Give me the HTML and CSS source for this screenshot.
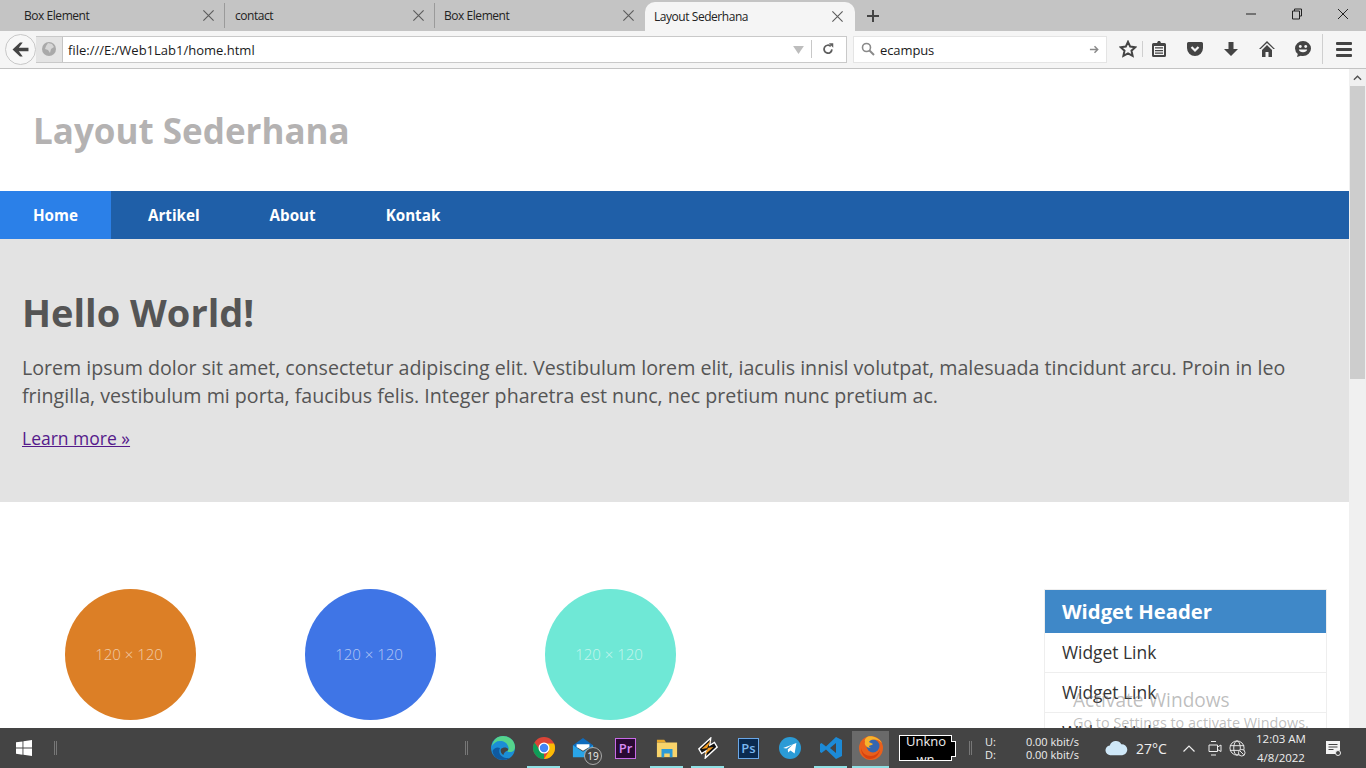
FILE: index.html
```html
<!DOCTYPE html>
<html lang="id">
<head>
<meta charset="utf-8">
<title>Layout Sederhana</title>
<link rel="stylesheet" href="styles.css">
</head>
<body>
<div class="window">
  <div class="tabbar">
    <div class="tab"><span class="tab-title">Box Element</span><svg class="x" viewBox="0 0 14 14"><path d="M1.500 1.500l11 11M12.500 1.500l-11 11"/></svg></div>
    <div class="tab"><span class="tab-title">contact</span><svg class="x" viewBox="0 0 14 14"><path d="M1.500 1.500l11 11M12.500 1.500l-11 11"/></svg></div>
    <div class="tab tab-last"><span class="tab-title">Box Element</span><svg class="x" viewBox="0 0 14 14"><path d="M1.500 1.500l11 11M12.500 1.500l-11 11"/></svg></div>
    <div class="tab tab-active"><span class="tab-title">Layout Sederhana</span><svg class="x" viewBox="0 0 14 14"><path d="M1.500 1.500l11 11M12.500 1.500l-11 11"/></svg></div>
    <svg class="newtab" viewBox="0 0 12 12"><path d="M6 0v12M0 6h12"/></svg>
    <div class="winctl">
      <svg class="winbtn" viewBox="0 0 12 12"><path d="M1 6h10"/></svg>
      <svg class="winbtn" viewBox="0 0 12 12"><path d="M3.500 3V1h7v7H8.500M1.500 3h7v8h-7z"/></svg>
      <svg class="winbtn" viewBox="0 0 12 12"><path d="M1 1l10 10M11 1L1 11"/></svg>
    </div>
  </div>
  <div class="toolbar">
    <div class="back"><svg viewBox="0 0 16 16" width="17" height="17"><path class="ink" d="M0.500 8L7.500 1.500h2.600L6.400 6.300H15.500v3.400H6.400l3.700 4.800H7.500z"/></svg></div>
    <div class="urlbar">
      <div class="identity"><svg viewBox="0 0 16 16" width="16" height="16"><circle cx="8" cy="8" r="7" fill="#a9a9a9"/><path d="M7 2l4 1 2 3-3 2-1 4-2-3-3-1 1-3z" fill="#d6d6d6"/></svg></div>
      <span class="url">file:///E:/Web1Lab1/home.html</span>
      <svg class="drop" viewBox="0 0 12 10"><path d="M0 1h12L6 10z"/></svg>
      <span class="urlsep"></span>
      <svg class="reload" viewBox="0 0 16 16"><path d="M12.500 8.500a4.500 4.500 0 1 1-1.400-3.600" fill="none" stroke="#5e5e5e" stroke-width="2"/><path d="M9 1.500h5v5z" fill="#5e5e5e"/></svg>
    </div>
    <div class="searchbar">
      <svg class="lens" viewBox="0 0 14 14"><circle cx="5.500" cy="5.500" r="4" fill="none" stroke="#8a8a8a" stroke-width="1.600"/><path d="M8.500 8.500l4.500 4.500" stroke="#8a8a8a" stroke-width="2"/></svg>
      <span class="query">ecampus</span>
      <svg class="go" viewBox="0 0 12 12"><path d="M1 6h8M6 2.500L9.500 6 6 9.500" fill="none" stroke="#8a8a8a" stroke-width="1.600"/></svg>
    </div>
    <div class="tools">
      <svg class="tool t-star" viewBox="0 0 18 18"><path d="M9 1.800l2.200 4.800 5.200.6-3.900 3.500 1.100 5.200L9 13.300l-4.600 2.600 1.100-5.200-3.900-3.500 5.200-.6z" fill="none" stroke="#444" stroke-width="2"/></svg>
      <span class="toolsep"></span>
      <svg class="tool t-list" viewBox="0 0 18 18"><path class="ink" fill-rule="evenodd" d="M2 4.500A1.500 1.500 0 0 1 3.500 3H7l1-2h2l1 2h3.500A1.500 1.500 0 0 1 16 4.500V15.500A1.500 1.500 0 0 1 14.500 17h-11A1.500 1.500 0 0 1 2 15.500zM4 6v9h10V6z"/><path class="ink" d="M5 7.300h8v1.300H5zM5 9.900h8v1.300H5zM5 12.500h8v1.300H5z"/></svg>
      <svg class="tool t-pocket" viewBox="0 0 18 18"><path class="ink" d="M2.500 2h13A1.500 1.500 0 0 1 17 3.500V8a8 8 0 0 1-16 0V3.500A1.500 1.500 0 0 1 2.500 2z"/><path d="M5.500 7L9 10.500 12.500 7" fill="none" stroke="#f5f5f5" stroke-width="2.200"/></svg>
      <svg class="tool t-down" viewBox="0 0 18 18"><path class="ink" d="M6.500 2h5v7h4.500L9 16 2 9h4.500z"/></svg>
      <svg class="tool t-home" viewBox="0 0 18 18"><path class="ink" d="M9 1l8 8h-1.700L9 3 2.700 9H1zM9 5l5 5v7h-3.500v-5h-3v5H4v-7z"/></svg>
      <svg class="tool t-smile" viewBox="0 0 18 18"><path class="ink" d="M9 1a8 7.500 0 0 1 0 15c-.8 0-1.500-.1-2.200-.3L3 17l.8-3A7.500 7.500 0 0 1 1 8.500 8 7.500 0 0 1 9 1z"/><circle cx="6.300" cy="6.500" r="1.400" fill="#f5f5f5"/><circle cx="11.700" cy="6.500" r="1.400" fill="#f5f5f5"/><path d="M4.800 9.500h8.400a4.300 3.500 0 0 1-8.400 0z" fill="#f5f5f5"/></svg>
      <span class="toolsep toolsep-menu"></span>
      <div class="burger"><span></span><span></span><span></span></div>
    </div>
  </div>
  <div class="viewport">
    <div class="page">
      <header class="site-header"><div class="site-title">Layout Sederhana</div></header>
      <nav class="site-nav">
        <a class="nav-item nav-current">Home</a>
        <a class="nav-item">Artikel</a>
        <a class="nav-item">About</a>
        <a class="nav-item">Kontak</a>
      </nav>
      <section class="hero">
        <h1>Hello World!</h1>
        <p>Lorem ipsum dolor sit amet, consectetur adipiscing elit. Vestibulum lorem elit, iaculis innisl volutpat, malesuada tincidunt arcu. Proin in leo fringilla, vestibulum mi porta, faucibus felis. Integer pharetra est nunc, nec pretium nunc pretium ac.</p>
        <a class="more">Learn more »</a>
      </section>
      <section class="content">
        <div class="circles">
          <div class="circle c-orange">120 × 120</div>
          <div class="circle c-blue">120 × 120</div>
          <div class="circle c-teal">120 × 120</div>
        </div>
        <aside class="widget">
          <div class="widget-head">Widget Header</div>
          <div class="widget-link">Widget Link</div>
          <div class="widget-link">Widget Link</div>
          <div class="widget-link">Widget Link</div>
        </aside>
      </section>
    </div>
    <div class="scrollbar">
      <svg class="sb-up" viewBox="0 0 10 6"><path d="M1 5l4-4 4 4" fill="none" stroke="#505050" stroke-width="1.500"/></svg>
      <div class="sb-thumb"></div>
    </div>
    <div class="activate">
      <div class="activate-big">Activate Windows</div>
      <div class="activate-small">Go to Settings to activate Windows.</div>
    </div>
  </div>
  <div class="taskbar">
    <svg class="start" viewBox="0 0 16 16"><path fill="#fff" d="M0 2.300l6.500-.9v6.200H0zM7.400 1.300L16 0v7.600H7.400zM0 8.500h6.500v6.200L0 13.800zM7.400 8.500H16V16l-8.600-1.200z"/></svg>
    <span class="grip grip-a"></span>
    <span class="grip grip-b"></span>
    <div class="apps">
      <div class="app"><svg class="i24" viewBox="0 0 24 24"><circle cx="12" cy="12" r="12" fill="#1b8ed6"/><path fill="#55d48c" d="M12 0c7 0 12 5 12 11 0 3-2 5-5 5-1 0-2 0-3-1 2-1 2-3 1-5-1-3-4-5-8-5S3 7 1 10C2 4 6 0 12 0z"/><path fill="#0f5aa0" d="M9 12c-2 4 0 9 6 10 2 .3 3 0 4-.5C17 23 15 24 12 24 6 24 2 20 1.500 15 3 12 6 10.500 9 12z"/><path fill="#444" d="M10 13c2-2 6-2 7 0 .5 1-.5 2-1.500 2-1.500 1-3 2-3 4-2-1-3.500-4-2.500-6z"/></svg></div>
      <div class="app app-run"><svg class="i22" viewBox="0 0 24 24"><circle cx="12" cy="12" r="12" fill="#db4437"/><path fill="#0f9d58" d="M12 24A12 12 0 0 1 1.600 6L8 15l4 3z"/><path fill="#fbbc05" d="M24 12a12 12 0 0 1-12 12l5-8-1-9h7a12 12 0 0 1 1 5z"/><circle cx="12" cy="12" r="6" fill="#fff"/><circle cx="12" cy="12" r="4.600" fill="#4285f4"/></svg></div>
      <div class="app app-mail"><svg class="i22 mail-icon" viewBox="0 0 24 24"><path fill="#0f6cbd" d="M12 1l11 8v3H1V9z"/><path fill="#2aa5e8" d="M1 9l11 7 11-7v13H1z"/><path fill="#fff" d="M5 8h14v3l-7 4-7-4z"/></svg><span class="badge">19</span></div>
      <div class="app"><div class="adobe adobe-pr">Pr</div></div>
      <div class="app app-run"><svg class="i22" viewBox="0 0 24 24"><path fill="#e8a92b" d="M1 3h8l2 3H1z"/><path fill="#f8d36a" d="M1 6h22v16H1z"/><path fill="#2b9ad6" d="M6 13h12v9h-3v-4H9v4H6z"/></svg></div>
      <div class="app app-run"><svg class="i22" viewBox="0 0 24 24"><path fill="#111" stroke="#fff" stroke-width="1.500" d="M15 1L2 13l3 5 5-3-1 8 13-12-3-5-5 3 1-8z"/><path fill="#f29a1f" d="M15 4L5 13l7-1-4 8 10-9-7 1z"/></svg></div>
      <div class="app"><div class="adobe adobe-ps">Ps</div></div>
      <div class="app"><svg class="i22" viewBox="0 0 24 24"><circle cx="12" cy="12" r="12" fill="#2b9bd6"/><path fill="#fff" d="M4.500 12L19 6.500 17 18l-4.500-3.300L10 17l-.5-3.500 6-5.500-7.500 4.500z"/></svg></div>
      <div class="app app-run"><svg class="i24" viewBox="0 0 24 24"><path fill="#1c8ad6" d="M17 1l6 3v16l-6 3-10-9.500L2.500 17 1 16v-8l1.500-1L7 10.500zM17 7l-6 5 6 5z"/></svg></div>
      <div class="app app-active"><svg class="i24" viewBox="0 0 24 24"><circle cx="12" cy="12" r="12" fill="#e8601c"/><circle cx="14" cy="10" r="6.500" fill="#3566b0"/><path fill="#f7b42c" d="M9 .5C14-.5 20 2 23 7c-3-3-6-4-9-3.500-2 .3-3 1-4 2.500 1 1 3 1 4 2-1 1.500-3 1-4 2 0 1 1 1.500 2 1.500-3 1-5-1-6-3-.5-1 0-2 0-3C5 4 7 1.500 9 .5z"/><path fill="#d9420f" d="M2 12c1 5 5 8 10 8 4 0 8-3 9-7-.5 6-5 10-10 10-5 0-9-5-9-11z"/></svg></div>
    </div>
    <div class="monitor"><div class="batt"><div class="batt-text">Unkno wn</div></div></div>
    <span class="grip grip-c"></span>
    <div class="net">
      <div class="net-row"><span>U:</span><span>0.00 kbit/s</span></div>
      <div class="net-row"><span>D:</span><span>0.00 kbit/s</span></div>
    </div>
    <div class="tray">
      <svg class="cloud" viewBox="0 0 24 16"><path fill="#cfe8f8" d="M6 15.500a5 5 0 0 1-1-10A6.500 6.500 0 0 1 17 4a5.700 5.700 0 0 1 1 11.500z"/></svg>
      <span class="temp">27°C</span>
      <svg class="chev" viewBox="0 0 12 7"><path d="M.5 6.500L6 1l5.500 5.500" fill="none" stroke="#eee" stroke-width="1.200"/></svg>
      <svg class="cam" viewBox="0 0 14 18"><path d="M1 6h8.500v6.500H1zM9.500 8l3.500-2v6.500l-3.500-2M3 2.500h5M3 16h5" fill="none" stroke="#eee"/></svg>
      <svg class="globe" viewBox="0 0 18 18"><circle cx="8.500" cy="8.500" r="7.500" fill="none" stroke="#eee"/><ellipse cx="8.500" cy="8.500" rx="3.500" ry="7.500" fill="none" stroke="#eee"/><path d="M1 6h15M1 11h15" stroke="#eee"/><circle cx="13.500" cy="13.500" r="3.500" fill="#444" stroke="#eee"/><path d="M11.500 11.500l4 4" stroke="#eee"/></svg>
      <div class="clock"><div>12:03 AM</div><div>4/8/2022</div></div>
      <svg class="notif" viewBox="0 0 16 16"><path fill="#f4f4f4" d="M1 1h14v9l-3 4H1z"/><path d="M3.500 4.500h9M3.500 7h9M3.500 9.500h5" stroke="#444"/><circle cx="13" cy="13" r="2.500" fill="#444" stroke="#eee"/></svg>
    </div>
  </div>
</div>
</body>
</html>
```
FILE: styles.css
```css
* { box-sizing: border-box; }
html, body { margin: 0; padding: 0; height: 100%; overflow: hidden; }
body { font-family: "Open Sans", sans-serif; }
.window { width: 1366px; height: 768px; display: flex; flex-direction: column; overflow: hidden; }
.ink { fill: #444; }

.tabbar { height: 31px; flex: none; background: #c4c4c4; display: flex; align-items: flex-start; padding-left: 14px; }
.tab { width: 211px; height: 25px; margin-top: 3px; display: flex; align-items: center; padding: 0 9px 0 10px; border-right: 1px solid #9a9a9a; flex: none; justify-content: space-between; }
.tab:nth-child(2) { width: 210px; }
.tab-last { border-right: none; width: 210px; padding: 0 10px 0 9px; }
.tab-title { font-size: 12px; letter-spacing: -.45px; color: #222; }
.x { width: 13px; height: 13px; fill: none; stroke: #5c5c5c; stroke-width: 1.200; }
.tab-active { width: 210px; height: 29px; margin-top: 2px; background: #f5f5f5; border-right: none; border-radius: 10px 10px 0 0; padding: 0 11px 0 9px; }
.newtab { width: 12px; height: 12px; margin: 10px 0 0 12px; stroke: #444; stroke-width: 2; fill: none; flex: none; }
.winctl { margin-left: auto; display: flex; gap: 34px; padding: 8px 17px 0 0; }
.winbtn { width: 12px; height: 12px; fill: none; stroke: #222; stroke-width: 1; }

.toolbar { height: 38px; flex: none; background: #f5f5f5; border-bottom: 1px solid #c3c3c3; display: flex; align-items: center; position: relative; padding: 0 0 1px 36px; }
.back { position: absolute; left: 5px; top: 3px; width: 31px; height: 31px; border-radius: 50%; background: #f7f7f7; border: 1px solid #c8c8c8; display: flex; align-items: center; justify-content: center; z-index: 1; }
.urlbar { width: 811px; height: 27px; background: #fff; border: 1px solid #c9c9c9; border-left: none; display: flex; align-items: center; flex: none; }
.identity { width: 27px; height: 25px; background: #e4e4e4; border-right: 1px solid #c4c4c4; display: flex; align-items: center; justify-content: flex-end; padding-right: 5px; flex: none; }
.url { font-size: 13px; color: #1a1a1a; margin: 1px 0 0 5px; flex: 1; }
.drop { width: 11px; height: 9px; fill: #bdbdbd; margin-right: 7px; }
.urlsep { width: 1px; height: 18px; background: #c8c8c8; }
.reload { width: 14px; height: 14px; margin: 0 11px 0 9px; }
.searchbar { width: 254px; height: 27px; margin-left: 6px; background: #fff; border: 1px solid #e4e4e4; display: flex; align-items: center; padding: 0 6px 0 7px; flex: none; }
.lens { width: 14px; height: 14px; }
.query { font-size: 13px; color: #1a1a1a; margin: 1px 0 0 5px; flex: 1; letter-spacing: -.1px; }
.go { width: 11px; height: 11px; }
.tools { display: flex; align-items: center; flex: 1; padding-left: 12px; height: 100%; }
.tool { width: 18px; height: 18px; flex: none; }
.toolsep { width: 1px; height: 16px; background: #cfcfcf; margin: 0 7px 0 5px; flex: none; }
.t-pocket, .t-down, .t-home, .t-smile { margin-left: 18px; }
.toolsep-menu { height: 30px; margin: 0 13px 0 10px; }
.burger { display: flex; flex-direction: column; gap: 3px; width: 16px; }
.burger span { height: 3px; background: #444; border-radius: 1px; }

.viewport { height: 659px; flex: none; display: flex; position: relative; overflow: hidden; background: #fff; }
.page { width: 1349px; flex: none; }
.site-header { height: 122px; padding: 38px 0 0 33px; }
.site-title { font-size: 35px; font-weight: 700; line-height: 48px; color: #b4b2b2; }
.site-nav { height: 48px; background: #1f5fa8; display: flex; gap: 4px; }
.nav-item { font-size: 15.200px; font-weight: 700; color: #fff; padding: 0 33px; line-height: 48px; }
.nav-current { background: #2b80e8; }
.hero { height: 263px; background: #e3e3e3; padding: 47px 22px 0; color: #555; }
.hero h1 { margin: 0; font-size: 38px; font-weight: 700; line-height: 52px; }
.hero p { margin: 16px 0 0; font-size: 19.640px; line-height: 27.500px; }
.more { display: inline-block; margin-top: 17px; font-size: 17.500px; line-height: 24px; color: #551a8b; text-decoration: underline; }
.content { display: flex; justify-content: space-between; padding: 87px 22px 0 65px; }
.circles { display: flex; gap: 109px; }
.circle { width: 131px; height: 131px; border-radius: 50%; display: flex; align-items: center; justify-content: center; font-size: 15px; font-weight: 300; color: rgba(255,255,255,.6); padding: 0 3px 2px 0; }
.c-orange { background: #dc7f26; }
.c-blue { background: #3f75e6; }
.c-teal { background: #6fe8d6; }
.widget { width: 283px; border: 1px solid #eee; }
.widget-head { height: 43px; background: #3f88c8; color: #fff; font-size: 20.300px; font-weight: 700; line-height: 43px; padding-left: 17px; }
.widget-link { height: 40px; border-bottom: 1px solid #eee; font-size: 17.400px; line-height: 39px; padding-left: 17px; color: #333; }

.scrollbar { flex: 1; background: #f0f0f0; position: relative; padding-top: 17px; }
.sb-up { position: absolute; top: 6px; left: 4px; width: 9px; height: 6px; }
.sb-thumb { margin-left: 1px; width: 15px; height: 293px; background: #cdcdcd; }
.activate { position: absolute; left: 1073px; top: 618px; color: rgba(110,110,110,.45); }
.activate-big { font-size: 19.100px; line-height: 26px; }
.activate-small { font-size: 14.400px; line-height: 20px; }

.taskbar { height: 40px; flex: none; background: #444; display: flex; align-items: center; position: relative; color: #eee; }
.start { width: 16px; height: 16px; margin-left: 16px; flex: none; }
.grip { width: 3px; height: 14px; border-left: 1px solid #777; border-right: 1px solid #777; flex: none; }
.grip-a { margin-left: 22px; }
.grip-b { margin-left: 408px; }
.apps { display: flex; margin-left: 14px; height: 40px; flex: none; }
.app { width: 41px; height: 40px; display: flex; align-items: center; justify-content: center; position: relative; flex: none; }
.i24 { width: 24px; height: 24px; }
.i22 { width: 22px; height: 22px; }
.mail-icon { margin-right: 4px; }
.app-run::after, .app-active::after { content: ""; position: absolute; left: 4px; right: 4px; bottom: 0; height: 2px; background: #8fe0e4; }
.app-active { width: 37px; height: 37px; margin: 3px 3px 0 1px; background: #6a6a6a; padding-bottom: 3px; }
.app-active::after { left: 0; right: 0; }
.badge { position: absolute; right: 3px; bottom: 3px; width: 18px; height: 18px; border-radius: 50%; background: #444; border: 1px solid #aaa; font-size: 10px; line-height: 16px; text-align: center; color: #eee; }
.adobe { width: 21px; height: 21px; font-size: 13px; line-height: 18px; text-align: center; font-weight: 600; }
.adobe-pr { background: #2a0a33; border: 1px solid #c86ae8; color: #d88af5; }
.adobe-ps { background: #0a2a50; border: 1px solid #6aa8e8; color: #7ab8f0; }
.monitor { margin-left: 7px; flex: none; }
.batt { width: 53px; height: 26px; background: #000; border: 1px solid #fff; color: #eee; font-size: 13px; line-height: 18px; text-align: center; position: relative; }
.batt::after { content: ""; position: absolute; left: 51px; top: 5px; width: 4px; height: 14px; background: #000; border: 1px solid #fff; border-left: none; }
.batt-text { height: 28px; overflow: hidden; margin-top: -4px; padding: 0 6px; }
.grip-c { margin-left: 17px; }
.net { margin-left: 13px; width: 94px; font-size: 11px; line-height: 13px; flex: none; }
.net-row { display: flex; justify-content: space-between; }
.tray { display: flex; align-items: center; flex: 1; margin-left: 26px; height: 40px; }
.cloud { width: 23px; height: 16px; flex: none; }
.temp { font-size: 14px; margin-left: 8px; width: 34px; }
.chev { width: 12px; height: 7px; margin-left: 13px; }
.cam { width: 14px; height: 18px; margin-left: 13px; }
.globe { width: 17px; height: 17px; margin-left: 7px; }
.clock { font-size: 11.500px; line-height: 19px; text-align: center; margin-left: 6px; width: 58px; }
.notif { width: 16px; height: 16px; margin-left: 15px; }
```
